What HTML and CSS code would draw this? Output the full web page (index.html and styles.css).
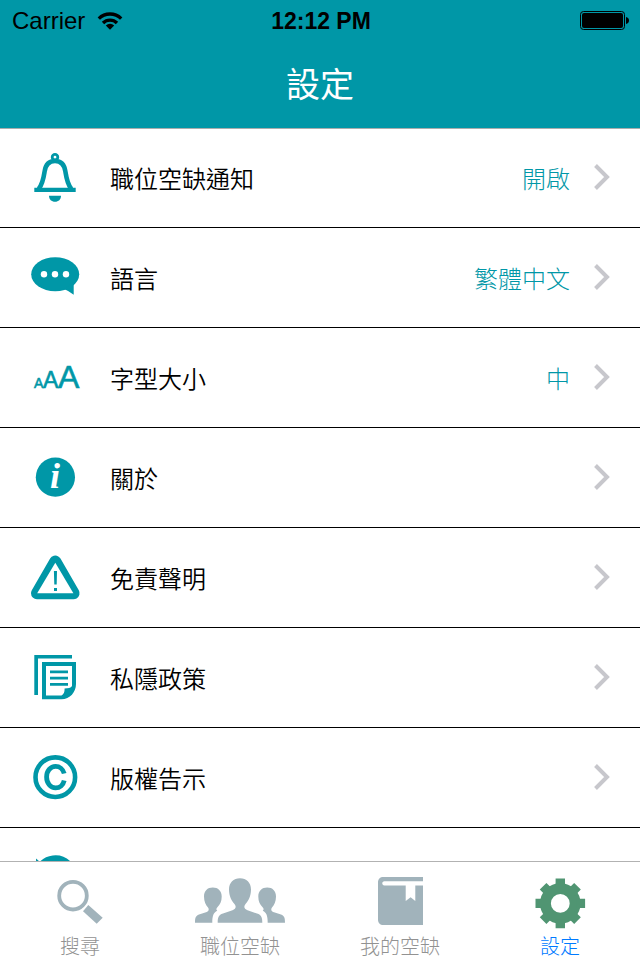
FILE: index.html
```html
<!DOCTYPE html>
<html lang="zh-Hant">
  <head>
    <meta charset="UTF-8" />
    <meta name="viewport" content="width=device-width, initial-scale=1.0" />
    <title>設定</title>
    <link rel="stylesheet" href="styles.css">
  </head>

  <body>
    <!-- Header -->
    <header>
      <div class="status-bar">
        <div class="carrier">
          <span>Carrier</span>
          <svg width="26" height="20" viewBox="0 0 26 20" aria-hidden="true">
            <g fill="none" stroke="#000" stroke-width="3.4">
              <path d="M1.8 7.6 A16 16 0 0 1 24.2 7.6" />
              <path d="M6 12 A10 10 0 0 1 20 12" />
            </g>
            <path d="M8.8 14.4 A6 6 0 0 1 17.2 14.4 L13 18.8 Z" />
          </svg>
        </div>
        <div class="time">12:12 PM</div>
        <div class="battery">
          <svg width="50" height="20" viewBox="0 0 50 20" aria-hidden="true">
            <rect x="0.5" y="0.5" width="44" height="18" rx="3" fill="none" stroke="#000" />
            <rect x="2" y="2" width="41" height="15" rx="2" />
            <path d="M46 6 C50 6.5 50 12.5 46 13 Z" />
          </svg>
        </div>
      </div>
      <h1>設定</h1>
    </header>

    <!-- Settings List -->
    <main>
      <ul class="settings-list">
        <li>
          <a href="#notifications" class="row">
            <svg class="row-icon" viewBox="0 0 50 48" aria-hidden="true">
              <circle cx="25" cy="4.2" r="2.8" fill="none" stroke="currentColor" stroke-width="2.8" />
              <path d="M8.7 36 C13 30.5 13.6 25 14.6 18.5 C15.6 11.5 19.5 8 25 8 C30.5 8 34.4 11.5 35.4 18.5 C36.4 25 37 30.5 41.3 36" fill="none" stroke="currentColor" stroke-width="4.6" />
              <path d="M4.3 34.8 H45.7 V39 H4.3 Z" />
              <path d="M19 42.8 H31 C31 46.5 28.5 48.8 25 48.8 C21.5 48.8 19 46.5 19 42.8 Z" />
            </svg>
            <span class="label">職位空缺通知</span>
            <span class="value">開啟</span>
            <svg class="chevron" viewBox="0 0 16 26" aria-hidden="true"><path d="M1.5 1.5 L13 13 L1.5 24.5" /></svg>
          </a>
        </li>
        <li>
          <a href="#language" class="row">
            <svg class="row-icon" viewBox="0 0 50 48" aria-hidden="true">
              <ellipse cx="25.2" cy="21.2" rx="24" ry="17" />
              <path d="M34 36 Q38 37.5 43.7 41.7 V29 Z" />
              <g fill="#fff">
                <circle cx="14" cy="21.2" r="3.2" />
                <circle cx="25" cy="21.2" r="3.2" />
                <circle cx="36" cy="21.2" r="3.2" />
              </g>
            </svg>
            <span class="label">語言</span>
            <span class="value">繁體中文</span>
            <svg class="chevron" viewBox="0 0 16 26" aria-hidden="true"><path d="M1.5 1.5 L13 13 L1.5 24.5" /></svg>
          </a>
        </li>
        <li>
          <a href="#font-size" class="row">
            <svg class="row-icon icon-letters" viewBox="0 0 50 48" aria-hidden="true">
              <text x="4" y="34.5" font-size="14">A</text>
              <text x="13" y="34.5" font-size="23">A</text>
              <text x="28" y="34.5" font-size="32">A</text>
            </svg>
            <span class="label">字型大小</span>
            <span class="value">中</span>
            <svg class="chevron" viewBox="0 0 16 26" aria-hidden="true"><path d="M1.5 1.5 L13 13 L1.5 24.5" /></svg>
          </a>
        </li>
        <li>
          <a href="#about" class="row">
            <svg class="row-icon icon-info" viewBox="0 0 50 48" aria-hidden="true">
              <circle cx="25.4" cy="24.2" r="19.6" />
              <text x="25" y="35" font-size="36" text-anchor="middle">i</text>
            </svg>
            <span class="label">關於</span>
            <svg class="chevron" viewBox="0 0 16 26" aria-hidden="true"><path d="M1.5 1.5 L13 13 L1.5 24.5" /></svg>
          </a>
        </li>
        <li>
          <a href="#disclaimer" class="row">
            <svg class="row-icon" viewBox="0 0 50 48" aria-hidden="true">
              <path d="M25.3 8.6 L43.6 40.2 H7 Z" stroke="currentColor" stroke-width="12" stroke-linejoin="round" />
              <path d="M25.3 9.8 L43.4 40.2 H7.2 Z" fill="#fff" />
              <path d="M23.9 18 H27 L26.7 31.5 H24.3 Z M24 35 H27 V38 H24 Z" />
            </svg>
            <span class="label">免責聲明</span>
            <svg class="chevron" viewBox="0 0 16 26" aria-hidden="true"><path d="M1.5 1.5 L13 13 L1.5 24.5" /></svg>
          </a>
        </li>
        <li>
          <a href="#privacy" class="row">
            <svg class="row-icon" viewBox="0 0 50 48" aria-hidden="true">
              <path d="M4.3 2 H42 V5.6 H8 V42 H4.3 Z" />
              <path fill-rule="evenodd" d="M12 9 H46 V31 C46 39 40 46.3 31.5 46.3 H12 Z M16 13 V42.4 H31.5 C34 41 34.6 39 34.6 35.4 C38 35.4 41 35 42 33 V13 Z" />
              <path d="M20 17.4 H38 V20.2 H20 Z M20 23.7 H38 V26.5 H20 Z M20 30 H38 V32.8 H20 Z" />
            </svg>
            <span class="label">私隱政策</span>
            <svg class="chevron" viewBox="0 0 16 26" aria-hidden="true"><path d="M1.5 1.5 L13 13 L1.5 24.5" /></svg>
          </a>
        </li>
        <li>
          <a href="#copyright" class="row">
            <svg class="row-icon" viewBox="0 0 50 48" aria-hidden="true">
              <g fill="none" stroke="currentColor">
                <circle cx="25.3" cy="24.2" r="19.8" stroke-width="4.6" />
                <path d="M34.2 20.5 C33 16 29.5 13.4 25.6 13.4 C20.5 13.4 16.6 17.8 16.6 24 C16.6 30.2 20.5 34.8 25.6 34.8 C29.8 34.8 33.2 32 34.2 27.4" stroke-width="4.8" />
              </g>
            </svg>
            <span class="label">版權告示</span>
            <svg class="chevron" viewBox="0 0 16 26" aria-hidden="true"><path d="M1.5 1.5 L13 13 L1.5 24.5" /></svg>
          </a>
        </li>
        <li>
          <a href="#reset" class="row" aria-label="重設">
            <svg class="row-icon" viewBox="0 0 50 48" aria-hidden="true">
              <path d="M9 14.5 A19 19 0 1 1 7 29" fill="none" stroke="currentColor" stroke-width="5.6" />
              <path d="M6 5.5 L17 15 L6 18 Z" />
            </svg>
          </a>
        </li>
      </ul>
    </main>

    <!-- Tab Bar -->
    <nav>
      <a href="#search" class="tab">
        <svg viewBox="0 0 90 52" aria-hidden="true">
          <circle cx="38" cy="18.7" r="13.8" fill="none" stroke="currentColor" stroke-width="3.8" />
          <path d="M53.3 28 L67.7 40.7 L61.7 46.7 L48 34.3 Z" />
        </svg>
        <span>搜尋</span>
      </a>
      <a href="#vacancies" class="tab">
        <svg viewBox="0 0 90 52" aria-hidden="true">
          <path d="M45 1.3 C38.5 1.3 34 5.8 34 12.5 C34 18.5 36.5 24 39.5 27 C41.5 29.5 41 32 37.5 33.2 L28 36.5 C23.5 38 22.7 40.5 22.7 45.7 H67.3 C67.3 40.5 66.5 38 62 36.5 L52.5 33.2 C49 32 48.5 29.5 50.5 27 C53.5 24 56 18.5 56 12.5 C56 5.8 51.5 1.3 45 1.3 Z" />
          <path id="person" d="M17.8 10.6 C12.5 10.6 9 14 9 19.5 C9 24.5 10.8 28 13 30.5 C14.5 32.8 13.5 34.5 11 35.3 L4 37.6 C0.6 39 0 41 0 45.7 H17.3 C17.3 39 18.5 35.5 22.2 33.8 C20.8 32.5 21.3 31.5 22.6 30 C25 27.5 26.7 24.5 26.7 19.5 C26.7 14 23 10.6 17.8 10.6 Z" />
          <use href="#person" transform="matrix(-1 0 0 1 90 0)" />
        </svg>
        <span>職位空缺</span>
      </a>
      <a href="#my-vacancies" class="tab">
        <svg viewBox="0 0 90 52" aria-hidden="true">
          <path d="M28.5 0 H68 V4.3 H29.4 C26.6 4.3 26.6 8.4 29.4 8.4 H50.7 V24 L55.6 20.3 L60.3 24 V8.4 H68 V48 H28.5 C25 48 23 46 23 42.5 V5.5 C23 2 25 0 28.5 0 Z" />
        </svg>
        <span>我的空缺</span>
      </a>
      <a href="#settings" class="tab active">
        <svg viewBox="0 0 90 52" aria-hidden="true">
          <g fill="none" stroke="currentColor">
            <circle cx="45.3" cy="26.4" r="14.8" stroke-width="10.8" />
            <g stroke-width="9.4">
              <path d="M45.3 1.6 V10 M45.3 42.8 V51.2 M20.5 26.4 H29 M61.6 26.4 H70.1" />
              <path d="M28.1 9.2 L34 15.1 M56.6 37.7 L62.5 43.6 M28.1 43.6 L34 37.7 M56.6 15.1 L62.5 9.2" />
            </g>
          </g>
        </svg>
        <span>設定</span>
      </a>
    </nav>
  </body>
</html>
```
FILE: styles.css
```css
/* General Styles */
* {
  box-sizing: border-box;
}

body {
  font-family: "Liberation Sans", "Noto Sans CJK TC", sans-serif;
  margin: 0;
  height: 100vh;
  display: flex;
  flex-direction: column;
  background-color: #ffffff;
  color: #000000;
  overflow: hidden;
}

a {
  color: inherit;
  text-decoration: none;
}

svg {
  display: block;
  fill: currentColor;
}

/* Header */
header {
  flex: none;
  background-color: #0097a7;
  box-shadow: 0 1px 0 #a9adad;
  position: relative;
  z-index: 1;
}

.status-bar {
  display: grid;
  grid-template-columns: 1fr auto 1fr;
  align-items: center;
  height: 42px;
  padding: 0 10px 0 12px;
  font-size: 24px;
}

.carrier {
  display: flex;
  align-items: center;
  gap: 12px;
}

.time {
  font-size: 23px;
  font-weight: bold;
}

.battery {
  justify-self: end;
}

header h1 {
  margin: 0;
  color: #ffffff;
  font-size: 34px;
  font-weight: 400;
  line-height: 86px;
  text-align: center;
}

/* Settings List */
main {
  flex: 1;
  min-height: 0;
  overflow: hidden;
}

.settings-list {
  list-style: none;
  margin: 0;
  padding: 0;
}

.row {
  display: flex;
  align-items: center;
  height: 100px;
  padding: 0 30px 1px;
  border-bottom: 1px solid #000000;
  font-size: 24px;
  font-weight: 350;
}

.row-icon {
  width: 50px;
  height: 48px;
  margin-right: 30px;
  color: #0097a7;
  overflow: visible;
}

.icon-letters text {
  font-family: "Liberation Sans", sans-serif;
  stroke: currentColor;
  stroke-width: 0.6px;
}

.icon-info text {
  fill: #ffffff;
  font-family: "Liberation Serif", serif;
  font-style: italic;
  font-weight: bold;
}

.label {
  flex: 1;
}

.value {
  color: #0097a7;
  font-weight: 300;
}

.chevron {
  width: 16px;
  height: 26px;
  margin-left: 24px;
  fill: none;
  stroke: #c7c7cc;
  stroke-width: 4;
}

/* Tab Bar */
nav {
  flex: none;
  display: grid;
  grid-template-columns: repeat(4, 1fr);
  height: 99px;
  border-top: 1px solid #b2b2b2;
  background-color: #ffffff;
}

.tab {
  display: flex;
  flex-direction: column;
  align-items: center;
  padding-top: 15px;
  color: #a1b3bb;
}

.tab svg {
  width: 90px;
  height: 52px;
}

.tab span {
  color: #929292;
  font-size: 20px;
  font-weight: 300;
  line-height: 36px;
}

.tab.active {
  color: #509572;
}

.tab.active span {
  color: #007aff;
}
```
